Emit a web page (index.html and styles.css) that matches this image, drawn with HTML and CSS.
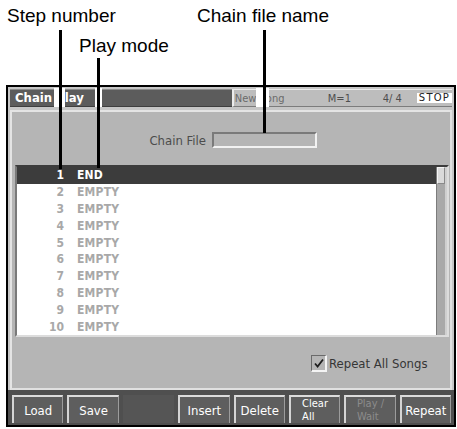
FILE: index.html
```html
<!DOCTYPE html>
<html>
<head>
<meta charset="utf-8">
<link rel="stylesheet" href="styles.css">
</head>
<body>
<div class="page">
  <div class="annot">
    <div class="ann-row1"><span class="ann-step">Step number</span><span>Chain file name</span></div>
    <div class="ann-row2">Play mode</div>
  </div>
  <div class="screen">
    <div class="titlebar">
      <div class="title-left">Chain Play</div>
      <div class="title-right">
        <span class="t-song">New Song</span>
        <span class="t-meas">M=1</span>
        <span class="t-beat">4/ 4</span>
        <span class="t-stop">STOP</span>
      </div>
    </div>
    <div class="panel">
      <div class="file-row"><span class="file-label">Chain File</span><span class="file-input"></span></div>
      <div class="list">
        <div class="rows">
          <div class="row sel"><span class="num">1</span><span class="mode">END</span></div>
          <div class="row"><span class="num">2</span><span class="mode">EMPTY</span></div>
          <div class="row"><span class="num">3</span><span class="mode">EMPTY</span></div>
          <div class="row"><span class="num">4</span><span class="mode">EMPTY</span></div>
          <div class="row"><span class="num">5</span><span class="mode">EMPTY</span></div>
          <div class="row"><span class="num">6</span><span class="mode">EMPTY</span></div>
          <div class="row"><span class="num">7</span><span class="mode">EMPTY</span></div>
          <div class="row"><span class="num">8</span><span class="mode">EMPTY</span></div>
          <div class="row"><span class="num">9</span><span class="mode">EMPTY</span></div>
          <div class="row"><span class="num">10</span><span class="mode">EMPTY</span></div>
        </div>
        <div class="scroll"><div class="thumb"></div></div>
      </div>
      <div class="repeat">
        <span class="check"><svg width="12" height="12" viewBox="0 0 12 12"><path d="M2 6.5 L4.6 9.5 L10 2.5" fill="none" stroke="#1e1e1e" stroke-width="1.8"/></svg></span>
        <span class="repeat-label">Repeat All Songs</span>
      </div>
    </div>
    <div class="fnbar">
      <div class="fbtn">Load</div>
      <div class="fbtn">Save</div>
      <div class="fslot"></div>
      <div class="fbtn">Insert</div>
      <div class="fbtn">Delete</div>
      <div class="fbtn two"><span class="l2"><span class="ln">Clear</span><span class="ln">All</span></span></div>
      <div class="fbtn two off"><span class="l2"><span class="ln">Play /</span><span class="ln">Wait</span></span></div>
      <div class="fbtn">Repeat</div>
    </div>
  </div>
  <div class="halo h1"></div>
  <div class="halo h2"></div>
  <div class="halo h3"></div>
  <div class="callout c1"></div>
  <div class="callout c2"></div>
  <div class="callout c3"></div>
</div>
</body>
</html>
```
FILE: styles.css
```css
* { box-sizing: border-box; }
html, body { margin: 0; padding: 0; background: #ffffff; }
.page {
  position: relative;
  width: 457px;
  height: 429px;
  overflow: hidden;
  background: #ffffff;
}
.annot {
  height: 85px;
  padding-top: 5px;
  font-family: "Liberation Sans", Arial, sans-serif;
  font-size: 19px;
  line-height: 22px;
  color: #000;
}
.ann-row1 { display: flex; padding-left: 7px; }
.ann-step { width: 190px; }
.ann-row2 { padding-left: 79px; margin-top: 8px; }

.screen {
  margin-left: 6px;
  width: 450px;
  height: 342px;
  border: 2px solid #000;
  background: #c6c6c6;
  display: flex;
  flex-direction: column;
  font-family: "DejaVu Sans Condensed", "DejaVu Sans", sans-serif;
  font-stretch: condensed;
}
.titlebar {
  margin: 2px 2px 0 2px;
  height: 18px;
  display: flex;
}
.title-left {
  width: 222px;
  background: #5c5c5c;
  border-top: 1px solid #8c8c8c;
  border-bottom: 1px solid #3e3e3e;
  color: #ffffff;
  font-weight: bold;
  font-size: 13px;
  line-height: 16px;
  padding-left: 5px;
}
.title-right {
  flex: 1;
  display: flex;
  align-items: center;
  background: #bdbdbd;
  border-left: 2px solid #ececec;
  border-top: 1px solid #ececec;
  border-bottom: 1px solid #7c7c7c;
  font-size: 11px;
  padding-left: 1px;
  color: #4e4e4e;
}
.t-song { width: 93px; color: #6a6a6a; }
.t-meas { width: 55px; }
.t-beat { width: 34px; }
.t-stop {
  background: #ffffff;
  color: #222;
  font-size: 10px;
  line-height: 10px;
  height: 10px;
  padding: 0 2px;
  letter-spacing: 1.2px;
  font-family: "DejaVu Sans", sans-serif;
  font-stretch: normal;
}

.panel {
  margin: 3px 2px 0 2px;
  height: 280px;
  background: #b5b5b5;
  border-top: 2px solid #e4e4e4;
  border-left: 2px solid #e4e4e4;
  border-right: 2px solid #e0e0e0;
  border-bottom: 2px solid #e0e0e0;
  display: flex;
  flex-direction: column;
}
.file-row {
  margin-top: 20px;
  height: 16px;
  display: flex;
  align-items: center;
}
.file-label {
  width: 194px;
  text-align: right;
  font-size: 13px;
  color: #4c4c4c;
}
.file-input {
  margin-left: 6px;
  width: 105px;
  height: 16px;
  background: #b5b5b5;
  border-top: 2px solid #7a7a7a;
  border-left: 2px solid #7a7a7a;
  border-right: 2px solid #f2f2f2;
  border-bottom: 2px solid #f2f2f2;
}
.list {
  margin: 17px 1px 0 3px;
  height: 172px;
  display: flex;
  background: #ffffff;
  border-top: 2px solid #3c3c3c;
  border-left: 2px solid #7a7a7a;
  border-right: 2px solid #dcdcdc;
  border-bottom: 2px solid #dcdcdc;
}
.rows { flex: 1; }
.row {
  height: 16.8px;
  display: flex;
  align-items: center;
  font-size: 12px;
  font-weight: bold;
  color: #a8a8a8;
}
.row.sel { background: #3c3c3c; color: #ffffff; }
.num { width: 47px; text-align: right; }
.mode { margin-left: 13px; letter-spacing: 0.2px; }
.scroll {
  width: 11px;
  background: #a9a9a9;
  border-left: 1px solid #7c7c7c;
  border-right: 2px solid #cfcfcf;
}
.thumb {
  height: 17px;
  background: #dadada;
  border: 1px solid #8a8a8a;
  border-top-color: #f4f4f4;
  border-left-color: #f4f4f4;
}
.repeat {
  margin-top: 18px;
  height: 16px;
  display: flex;
  align-items: center;
  padding-left: 299px;
}
.check {
  width: 16px;
  height: 17px;
  display: flex;
  align-items: center;
  justify-content: center;
  background: #b5b5b5;
  border-top: 1px solid #6a6a6a;
  border-left: 1px solid #6a6a6a;
  border-right: 2px solid #f4f4f4;
  border-bottom: 2px solid #f4f4f4;
}
.repeat-label {
  margin-left: 2px;
  font-size: 13px;
  color: #363636;
}

.fnbar {
  flex: 1;
  background: #4f4f4f;
  display: grid;
  grid-template-columns: repeat(8, 1fr);
  column-gap: 4px;
  padding: 5px 3px 2px 4px;
}
.fbtn {
  background: #5e5e5e;
  border-top: 2px solid #dcdcdc;
  border-left: 2px solid #d4d4d4;
  border-right: 1px solid #9c9c9c;
  display: flex;
  align-items: center;
  justify-content: center;
  color: #ffffff;
  font-size: 13px;
  padding-top: 1px;
}
.fbtn.two { padding-top: 0; }
.l2 {
  display: flex;
  flex-direction: column;
  align-items: flex-start;
}
.ln {
  display: block;
  font-size: 11px;
  line-height: 13px;
  height: 13px;
}
.fbtn.off { color: #8c8c8c; }
.fslot { background: #555555; }

.halo {
  position: absolute;
  top: 88px;
  height: 19px;
  background: #ffffff;
}
.h1 { left: 54px; width: 11px; }
.h2 { left: 95px; width: 7px; }
.h3 { left: 256px; width: 13px; }
.callout {
  position: absolute;
  width: 3px;
  background: #000;
}
.c1 { left: 59px; top: 30px; height: 139px; }
.c2 { left: 97px; top: 58px; height: 110px; }
.c3 { left: 263px; top: 30px; height: 103px; }
```
